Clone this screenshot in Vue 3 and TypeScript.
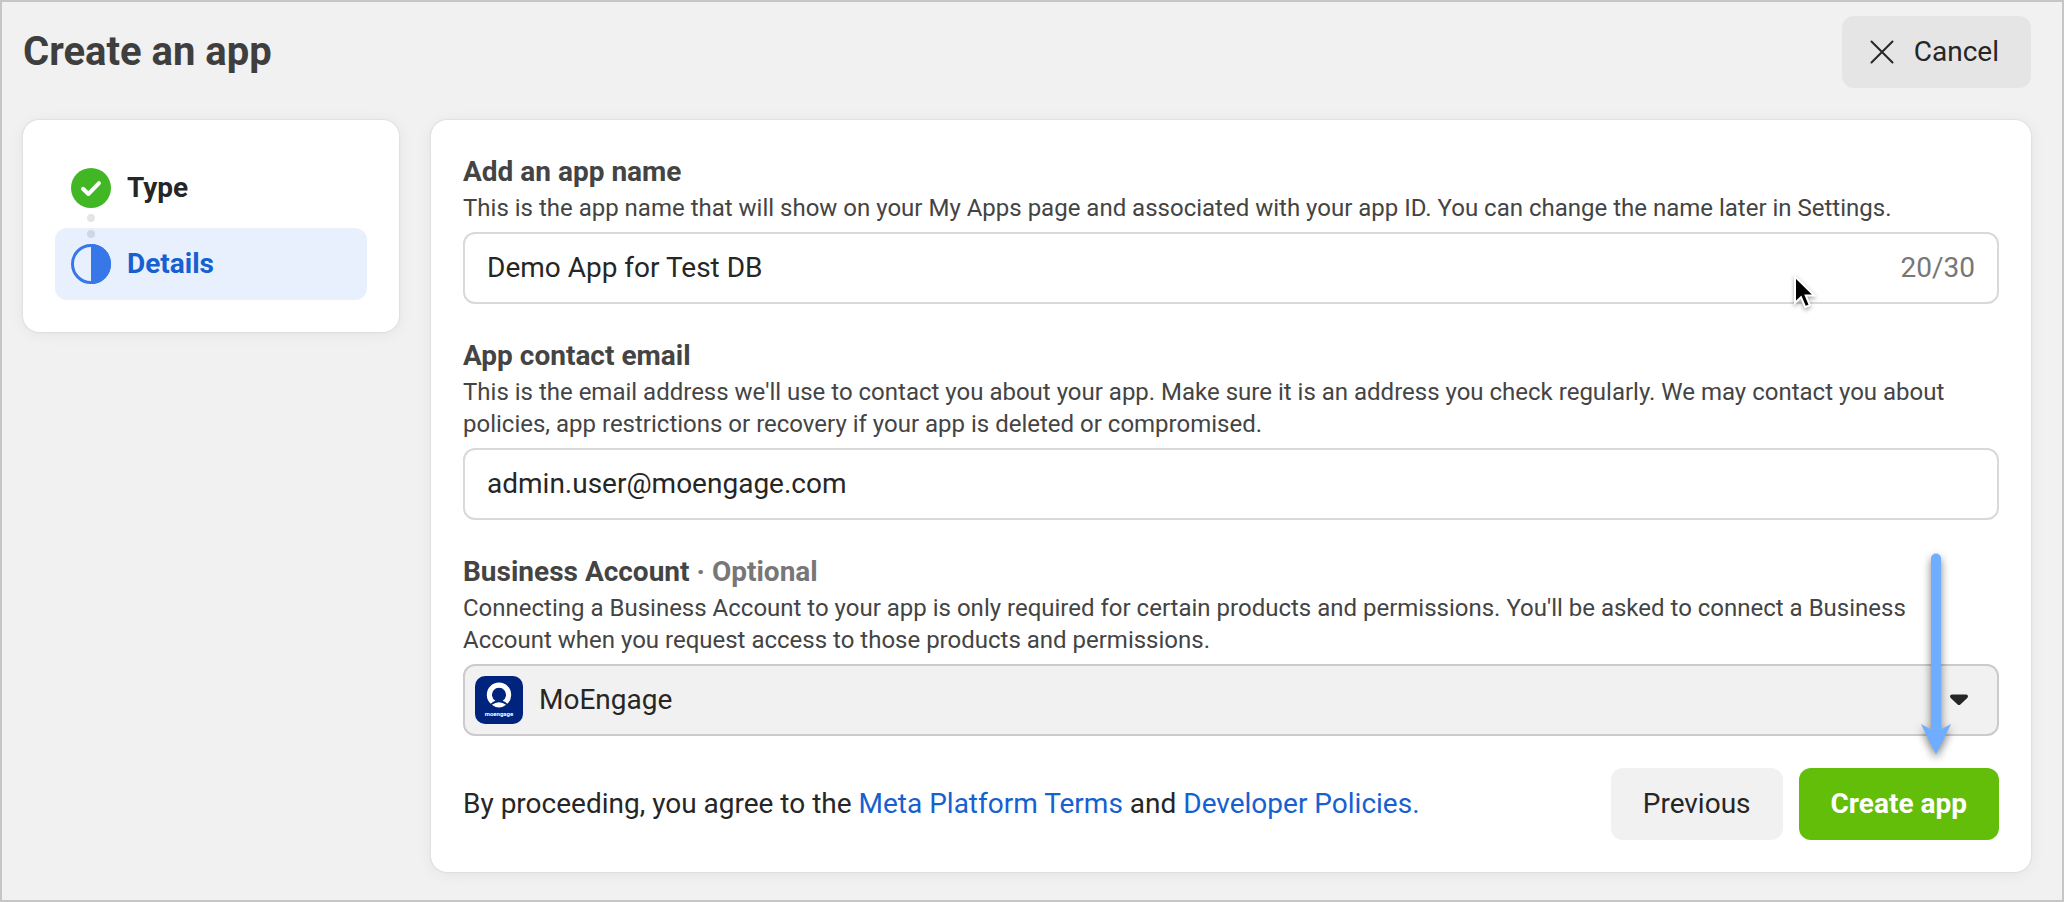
<script setup lang="ts">
import { computed, ref } from 'vue'

const maxLength = 30
const appName = ref('Demo App for Test DB')
const email = ref('admin.user@moengage.com')
const account = ref('MoEngage')
const counter = computed(() => `${appName.value.length}/${maxLength}`)
</script>

<template>
  <div class="page">
    <header class="header">
      <h1 class="title">Create an app</h1>
      <button type="button" class="btn btn-cancel">
        <svg class="close-icon" width="24" height="24" viewBox="0 0 24 24" aria-hidden="true">
          <path d="M1.5 1.5 22.5 22.5M22.5 1.5 1.5 22.5" fill="none" stroke="currentColor" stroke-width="2" stroke-linecap="round" />
        </svg>
        Cancel
      </button>
    </header>

    <div class="columns">
      <nav class="card steps" aria-label="Steps">
        <ol class="step-list">
          <li class="step">
            <svg width="40" height="40" viewBox="0 0 40 40" aria-hidden="true">
              <circle cx="20" cy="20" r="20" fill="#41b726" />
              <path d="M12 20.8 17.4 26 28 15.2" fill="none" stroke="#fff" stroke-width="4" stroke-linecap="round" stroke-linejoin="round" />
            </svg>
            <span>Type</span>
          </li>
          <li class="step step-current" aria-current="step">
            <span class="dots" aria-hidden="true"><i class="dot"></i><i class="dot"></i></span>
            <svg width="40" height="40" viewBox="0 0 40 40" aria-hidden="true">
              <circle cx="20" cy="20" r="18.5" fill="none" stroke="#3877e8" stroke-width="3" />
              <path d="M20 0a20 20 0 0 1 0 40z" fill="#3877e8" />
            </svg>
            <span>Details</span>
          </li>
        </ol>
      </nav>

      <form class="card details" @submit.prevent>
        <div class="field">
          <label class="label" for="app-name">Add an app name</label>
          <p id="app-name-help" class="help">
            This is the app name that will show on your My Apps page and associated with your app ID. You can change the name later in Settings.
          </p>
          <div class="box">
            <input id="app-name" v-model="appName" class="input" type="text" :maxlength="maxLength" aria-describedby="app-name-help" />
            <span class="counter">{{ counter }}</span>
            <svg class="pointer" width="28" height="40" viewBox="0 0 28 40" aria-hidden="true">
              <path d="M4 2.5V29l6-5.7 4.2 9.8 4.6-2-4.1-9.600h8.600z" fill="#000" stroke="#fff" stroke-width="2" />
            </svg>
          </div>
        </div>

        <div class="field">
          <label class="label" for="email">App contact email</label>
          <p id="email-help" class="help">
            This is the email address we'll use to contact you about your app. Make sure it is an address you check regularly. We may contact you about policies, app restrictions or recovery if your app is deleted or compromised.
          </p>
          <div class="box">
            <input id="email" v-model="email" class="input" type="email" aria-describedby="email-help" />
          </div>
        </div>

        <div class="field">
          <label class="label" for="account">Business Account <span class="optional">· Optional</span></label>
          <p id="account-help" class="help">
            Connecting a Business Account to your app is only required for certain products and permissions. You'll be asked to connect a Business Account when you request access to those products and permissions.
          </p>
          <div class="box box-select">
            <svg class="logo" width="48" height="48" viewBox="0 0 48 48" aria-hidden="true">
              <rect width="48" height="48" rx="10" fill="#00237d" />
              <path d="M15.800 27.800A12.200 12.200 0 1 1 32.200 27.800Q30.400 25.600 27.600 24.800A7 7 0 1 0 20.400 24.800Q17.600 25.600 15.800 27.800z" fill="#fff" />
              <path d="M16.800 28.800Q24 23.600 31.200 28.800Q24 34.400 16.800 28.800z" fill="#fff" />
              <text x="24" y="39.500" text-anchor="middle" class="logo-text">moengage</text>
            </svg>
            <select id="account" v-model="account" class="select" aria-describedby="account-help">
              <option value="MoEngage">MoEngage</option>
            </select>
            <svg class="caret" width="18" height="12" viewBox="0 0 18 12" aria-hidden="true">
              <path d="M2 .5h14q2 0 2 1.800 0 1-1 1.900l-6.600 6.200q-1.400 1.200-2.800 0L1 4.200Q0 3.300 0 2.300 0 .5 2 .5z" fill="#262626" />
            </svg>
          </div>
        </div>

        <footer class="footer">
          <p class="terms">
            By proceeding, you agree to the <a href="#terms">Meta Platform Terms</a> and <a href="#policies">Developer Policies.</a>
          </p>
          <div class="actions">
            <button type="button" class="btn btn-previous">Previous</button>
            <button type="submit" class="btn btn-create">Create app</button>
          </div>
          <svg class="arrow" width="30" height="202" viewBox="0 0 30 202" aria-hidden="true">
            <path d="M10 5.500a5 5 0 0 1 10 0V176.500L30 171 15 201.500 0 171 10 176.500z" fill="#6eadff" />
          </svg>
        </footer>
      </form>
    </div>
  </div>
</template>

<style>
body {
  margin: 0;
}
</style>

<style scoped>
.page {
  box-sizing: border-box;
  min-height: 100vh;
  padding: 14px 31px 28px 21px;
  border: 2px solid #c6c6c6;
  background: #f1f1f1;
  color: #262626;
  font-family: Roboto, 'Liberation Sans', sans-serif;
  font-size: 28px;
  line-height: 40px;
}

.header {
  display: flex;
  align-items: center;
  justify-content: space-between;
  margin-bottom: 32px;
}

.title {
  margin: 0;
  color: #3e3e3e;
  font-size: 40px;
  line-height: 48px;
  font-weight: 700;
}

.btn {
  display: flex;
  align-items: center;
  height: 72px;
  padding: 0 32px;
  border: 0;
  border-radius: 12px;
  background: #f1f1f1;
  color: #262626;
  font: inherit;
  cursor: pointer;
}

.btn-cancel {
  gap: 20px;
  padding: 0 32px 0 28px;
  background: #e5e5e5;
}

.btn-create {
  background: #63be09;
  color: #fff;
  font-weight: 700;
}

.columns {
  display: flex;
  align-items: flex-start;
  gap: 32px;
}

.card {
  box-sizing: border-box;
  padding: 32px;
  border-radius: 16px;
  background: #fff;
  box-shadow: 0 0 2px rgba(0, 0, 0, 0.16), 0 2px 16px rgba(0, 0, 0, 0.06);
}

.steps {
  flex: 0 0 376px;
}

.step-list {
  display: flex;
  flex-direction: column;
  gap: 4px;
  margin: 0;
  padding: 0;
  list-style: none;
}

.step {
  position: relative;
  display: flex;
  align-items: center;
  gap: 16px;
  padding: 16px;
  border-radius: 12px;
  font-weight: 700;
}

.step-current {
  background: #e8f0fe;
  color: #1660cf;
}

.dots {
  position: absolute;
  top: -14px;
  left: 32px;
  display: flex;
  flex-direction: column;
  gap: 8px;
}

.dot {
  width: 8px;
  height: 8px;
  border-radius: 50%;
  background: rgba(0, 0, 0, 0.1);
}

.details {
  flex: 1;
  min-width: 0;
  display: flex;
  flex-direction: column;
  gap: 32px;
}

.label {
  display: block;
  color: #444;
  font-weight: 700;
}

.optional {
  color: #777;
}

.help {
  margin: 0 0 8px;
  color: #444;
  font-size: 24px;
  line-height: 32px;
}

.box {
  position: relative;
  box-sizing: border-box;
  display: flex;
  align-items: center;
  height: 72px;
  border: 2px solid #d9d9d9;
  border-radius: 12px;
  background: #fff;
}

.box-select {
  border-color: #cbcbcb;
  background: #f1f1f1;
}

.input,
.select {
  box-sizing: border-box;
  flex: 1;
  min-width: 0;
  height: 100%;
  padding: 0 22px 2px;
  border: 0;
  outline: 0;
  background: transparent;
  color: #262626;
  font: inherit;
}

.select {
  appearance: none;
  padding: 0 22px 0 74px;
}

.counter {
  padding-right: 22px;
  color: #777;
}

.logo {
  position: absolute;
  left: 10px;
}

.logo-text {
  fill: #fff;
  font-size: 6px;
  font-weight: 700;
}

.caret {
  position: absolute;
  right: 29px;
  pointer-events: none;
}

.pointer {
  position: absolute;
  top: 40px;
  right: 178px;
  pointer-events: none;
  filter: drop-shadow(0 2px 2px rgba(0, 0, 0, 0.35));
}

.footer {
  position: relative;
  display: flex;
  align-items: center;
  justify-content: space-between;
}

.terms {
  margin: 0;
}

.terms a {
  color: #1660cf;
  text-decoration: none;
}

.actions {
  display: flex;
  gap: 16px;
}

.arrow {
  position: absolute;
  right: 48px;
  bottom: 85px;
  overflow: visible;
  pointer-events: none;
  filter: drop-shadow(0 4px 4px rgba(0, 0, 0, 0.5));
}
</style>
